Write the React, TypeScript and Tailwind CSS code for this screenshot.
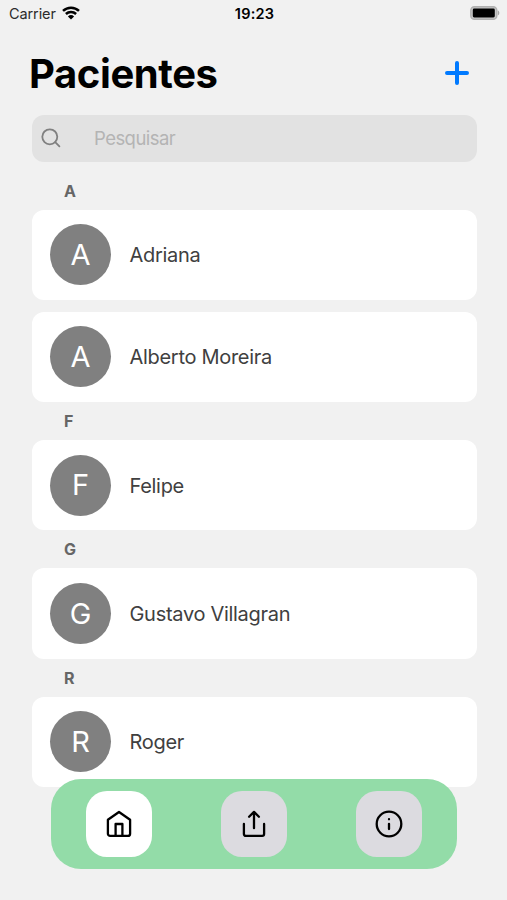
import React from 'react';

interface Patient {
  id: number;
  name: string;
}

interface Section {
  letter: string;
  patients: Patient[];
}

const sections: Section[] = [
  {
    letter: 'A',
    patients: [
      { id: 1, name: 'Adriana' },
      { id: 2, name: 'Alberto Moreira' },
    ],
  },
  { letter: 'F', patients: [{ id: 3, name: 'Felipe' }] },
  { letter: 'G', patients: [{ id: 4, name: 'Gustavo Villagran' }] },
  { letter: 'R', patients: [{ id: 5, name: 'Roger' }] },
];

const StatusBar: React.FC = () => {
  return (
    <div className="grid h-7 grid-cols-3 items-center pl-[9px] pr-[7px] text-[14.5px] leading-none">
      <div className="flex items-center gap-[6px] text-[#2b2b2b]">
        <span className="tracking-[-0.1px]">Carrier</span>
        <svg className="mb-[2px] h-[14px] w-[18px] text-black" viewBox="0 0 18 14" fill="none" stroke="currentColor" strokeWidth={2.5}>
          <path d="M1 4.9a11.6 11.6 0 0 1 16 0" />
          <path d="M3.9 8a7.4 7.4 0 0 1 10.2 0" />
          <path d="M9 13.6 5.9 10.4a4.5 4.5 0 0 1 6.2 0z" fill="currentColor" stroke="none" />
        </svg>
      </div>
      <span className="text-center font-semibold tracking-[0.2px] text-black">19:23</span>
      <svg className="mb-[2px] h-[14px] w-[30px] justify-self-end" viewBox="0 0 30 14">
        <rect x="0.8" y="0.7" width="26" height="12.6" rx="3.6" fill="#c6c6c6" stroke="#b0b0b0" strokeWidth="1.4" />
        <rect x="2.8" y="2.6" width="22" height="8.8" rx="1.4" fill="#000" />
        <path d="M27.8 4.6c2 .6 2 4.2 0 4.8z" fill="#a6a6a6" />
      </svg>
    </div>
  );
};

const PatientCard: React.FC<{ patient: Patient }> = ({ patient }) => {
  return (
    <li className="flex h-[90.3px] items-center rounded-xl bg-white pl-[18px]">
      <div className="flex size-[61px] shrink-0 items-center justify-center rounded-full bg-[#808080] text-[29px] text-white">
        {patient.name[0]}
      </div>
      <span className="ml-[18.5px] pt-px text-[20px] tracking-[-0.3px] text-[#404040]">{patient.name}</span>
    </li>
  );
};

const TabBar: React.FC = () => {
  return (
    <nav className="absolute left-[51px] top-[779px] flex h-[90px] w-[405.5px] items-center justify-around rounded-[30px] bg-[#93dca8] text-black">
      <button className="flex size-[66px] items-center justify-center rounded-[21px] bg-white" aria-label="Home">
        <svg className="size-7" viewBox="0 0 28 28" fill="none" stroke="currentColor" strokeWidth={2.3} strokeLinecap="round" strokeLinejoin="round">
          <path d="M2.9 9.8 14 2l11.1 7.8v13.9a2.2 2.2 0 0 1-2.2 2.2H5.1a2.2 2.2 0 0 1-2.2-2.2z" />
          <path d="M10.6 25.5V14h6.8v11.5" />
        </svg>
      </button>
      <button className="flex size-[66px] items-center justify-center rounded-[21px] bg-[#dcdbe0]" aria-label="Share">
        <svg className="size-7" viewBox="0 0 28 28" fill="none" stroke="currentColor" strokeWidth={2.3} strokeLinecap="round" strokeLinejoin="round">
          <path d="M3.9 14v10a1.9 1.9 0 0 0 1.9 1.9h16.4a1.9 1.9 0 0 0 1.9-1.9V14" />
          <path d="M9.1 6.8 14 1.9l4.9 4.9M14 1.9v16.3" />
        </svg>
      </button>
      <button className="flex size-[66px] items-center justify-center rounded-[21px] bg-[#dcdbe0]" aria-label="Info">
        <svg className="size-7" viewBox="0 0 28 28" fill="none" stroke="currentColor" strokeWidth={2.3} strokeLinecap="round">
          <circle cx="14" cy="14" r="12.3" />
          <path d="M14 13.8v5.3M14 9.2v.1" />
        </svg>
      </button>
    </nav>
  );
};

const App: React.FC = () => {
  return (
    <div className="relative h-[900px] w-[507px] overflow-hidden bg-[#f1f1f1] font-['Inter',sans-serif]">
      <StatusBar />
      <header className="flex h-[87px] items-center justify-between pl-[29px] pr-[38px] pt-[2px]">
        <h1 className="pt-[2px] text-[40px] font-bold leading-none tracking-[-0.4px] text-black">Pacientes</h1>
        <button className="text-[#007aff]" aria-label="Adicionar">
          <svg className="size-6" viewBox="0 0 24 24" fill="none" stroke="currentColor" strokeWidth={4} strokeLinecap="round">
            <path d="M12 2v20M2 12h20" />
          </svg>
        </button>
      </header>
      <main className="pl-8 pr-[30.5px]">
        <div className="flex h-[47px] items-center rounded-xl bg-[#e2e2e2] pl-[9px]">
          <svg className="mb-px size-[20px] text-[#808080]" viewBox="0 0 20 20" fill="none" stroke="currentColor" strokeWidth={1.8} strokeLinecap="round">
            <circle cx="8.8" cy="8.8" r="7.5" />
            <path d="m14.2 14.2 4.2 4.2" />
          </svg>
          <span className="ml-[33px] pt-px text-[18.5px] tracking-[-0.55px] text-[#b4b4b4]">Pesquisar</span>
        </div>
        <div className="pt-[9.5px]">
          {sections.map((section) => (
            <section key={section.letter}>
              <h2 className="flex h-[38px] items-center pl-8 text-[16px] font-bold text-[#666]">{section.letter}</h2>
              <ul className="flex flex-col gap-3">
                {section.patients.map((patient) => (
                  <PatientCard key={patient.id} patient={patient} />
                ))}
              </ul>
            </section>
          ))}
        </div>
      </main>
      <TabBar />
    </div>
  );
};

export default App;
